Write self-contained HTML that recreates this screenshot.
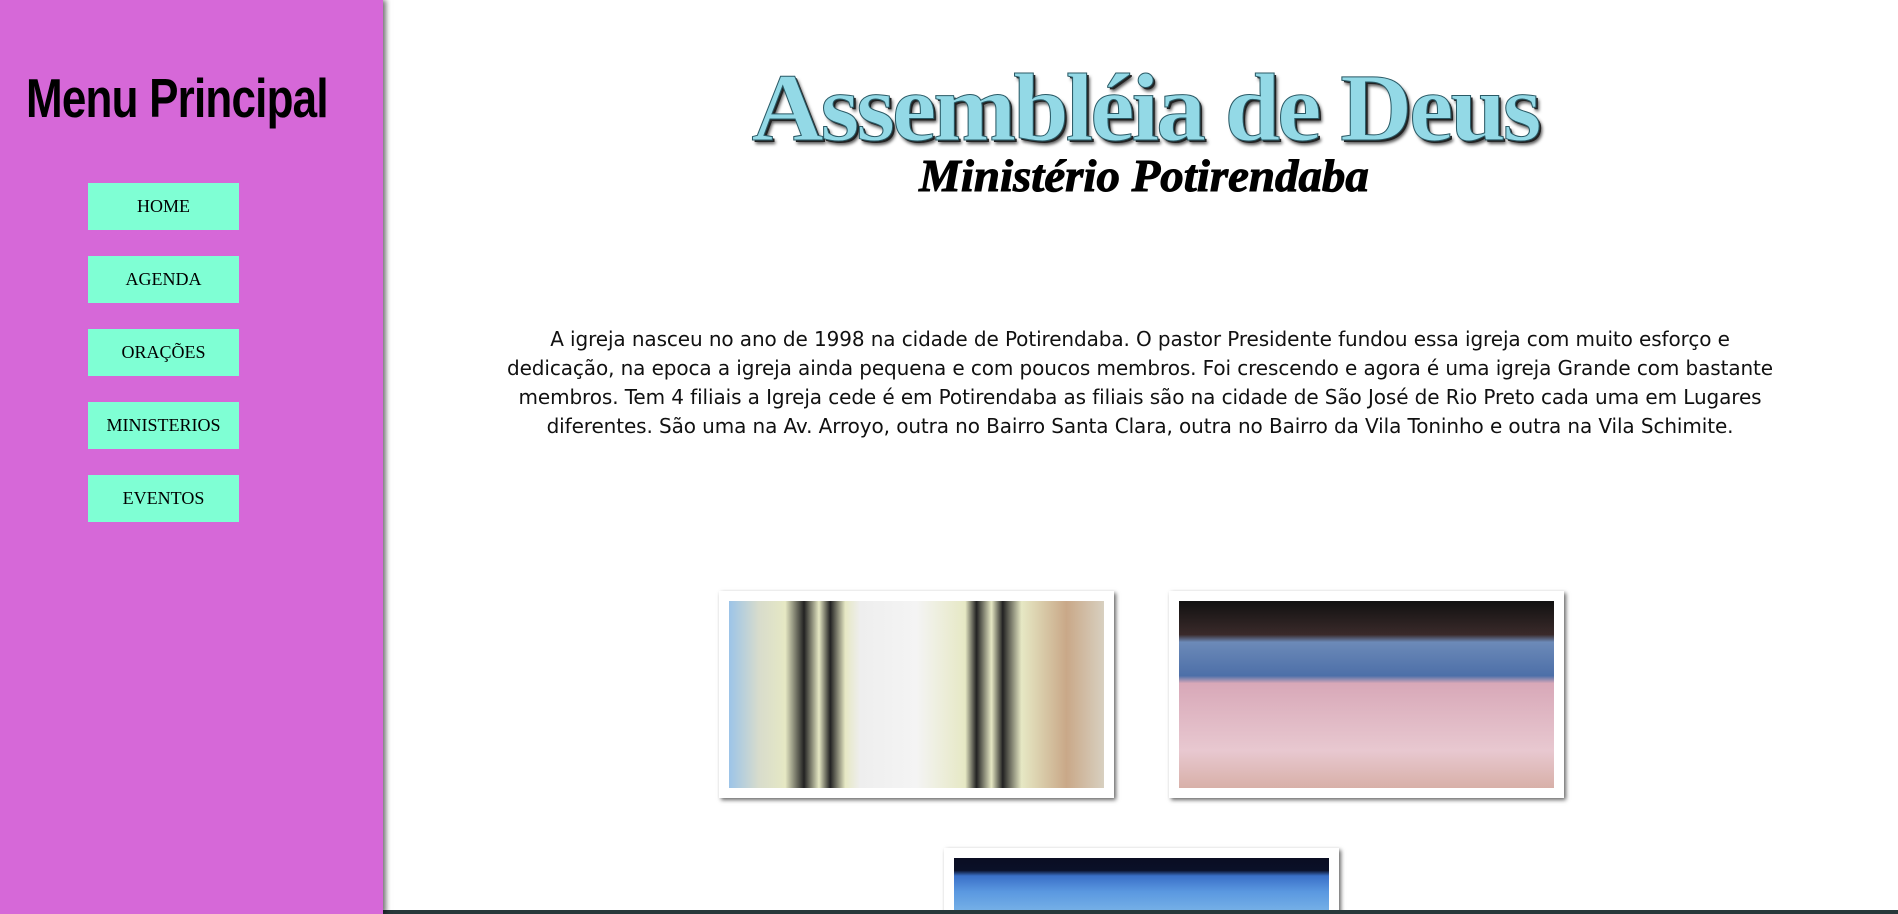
<!DOCTYPE html>
<html><head><meta charset="utf-8"><style>
html,body{margin:0;padding:0;width:1898px;height:914px;overflow:hidden;background:#fff;font-family:"Liberation Sans",sans-serif}
#wrap{position:relative;width:1898px;height:914px;overflow:hidden}
#side{position:absolute;left:0;top:0;width:383px;height:914px;background:#d668d8;box-shadow:3px 0 5px rgba(0,0,0,.55);z-index:2}
#side h1{position:absolute;left:26px;top:66px;margin:0;font:bold 55px "Liberation Sans Narrow","Liberation Sans",sans-serif;letter-spacing:-1px;color:#000;transform:scaleX(.8);transform-origin:left;white-space:nowrap}
.btn{position:absolute;left:88px;width:151px;height:47px;background:#7fffd4;font:18px "Liberation Serif",serif;color:#000;text-align:center;line-height:47px}
#t1{position:absolute;left:740px;top:58px;width:810px;text-align:center;font:bold 96px "Liberation Serif",serif;color:#93d9e6;letter-spacing:-3px;transform:scaleX(1.04);text-shadow:2px 2px 0 #222,3px 4px 3px #555;-webkit-text-stroke:1px #2a5a66;line-height:100px;white-space:nowrap}
#t2{position:absolute;left:919px;top:148px;width:450px;text-align:center;font:italic bold 46px "Liberation Serif",serif;color:#000;transform:scaleX(1.02);line-height:56px;white-space:nowrap;-webkit-text-stroke:1px #000}
#p{position:absolute;left:340px;top:325px;width:1600px;text-align:center;font:20px "DejaVu Sans","Liberation Sans",sans-serif;line-height:29px;color:#111;letter-spacing:-.1px}
.fr{position:absolute;width:375px;height:187px;padding:10px;background:#fff;box-shadow:2px 2px 4px rgba(0,0,0,.6)}
.fr div{width:100%;height:100%}
#bot{position:absolute;left:383px;right:0;top:910px;height:4px;background:#28383a;z-index:1}
</style></head><body><div id="wrap">
<div id="side"><h1>Menu Principal</h1>
<div class="btn" style="top:183px">HOME</div>
<div class="btn" style="top:256px">AGENDA</div>
<div class="btn" style="top:329px">ORAÇÕES</div>
<div class="btn" style="top:402px">MINISTERIOS</div>
<div class="btn" style="top:475px">EVENTOS</div>
</div>
<div id="t1">Assembléia de Deus</div>
<div id="t2">Ministério Potirendaba</div>
<div id="p">A igreja nasceu no ano de 1998 na cidade de Potirendaba. O pastor Presidente fundou essa igreja com muito esforço e<br>dedicação, na epoca a igreja ainda pequena e com poucos membros. Foi crescendo e agora é uma igreja Grande com bastante<br>membros. Tem 4 filiais a Igreja cede é em Potirendaba as filiais são na cidade de São José de Rio Preto cada uma em Lugares<br>diferentes. São uma na Av. Arroyo, outra no Bairro Santa Clara, outra no Bairro da Vila Toninho e outra na Vila Schimite.</div>
<div class="fr" style="left:719px;top:591px"><div style="background:linear-gradient(90deg,#9cc4e8 0,#d8dccc 8%,#e6e8c4 15%,#222 20%,#e6e8c4 24%,#222 27%,#e6e8c4 31%,#eee 35%,#f4f4f4 50%,#e6e8c4 63%,#222 66%,#e6e8c4 70%,#222 73%,#e6e8c4 78%,#c9a888 90%,#d8d0c0 100%)"></div></div>
<div class="fr" style="left:1169px;top:591px"><div style="background:linear-gradient(180deg,#111 0,#3a2a2a 18%,#6c8ab8 22%,#4d6fa8 40%,#d8a8b8 44%,#e8c8d0 80%,#d8b0a8 100%)"></div></div>
<div class="fr" style="left:944px;top:848px;height:56px;padding-bottom:0"><div style="background:linear-gradient(180deg,#0a0d22 0,#0a1028 22%,#3a70c8 32%,#5a98e0 60%,#7ab4e8 100%)"></div></div>
<div id="bot"></div>
</div></body></html>
